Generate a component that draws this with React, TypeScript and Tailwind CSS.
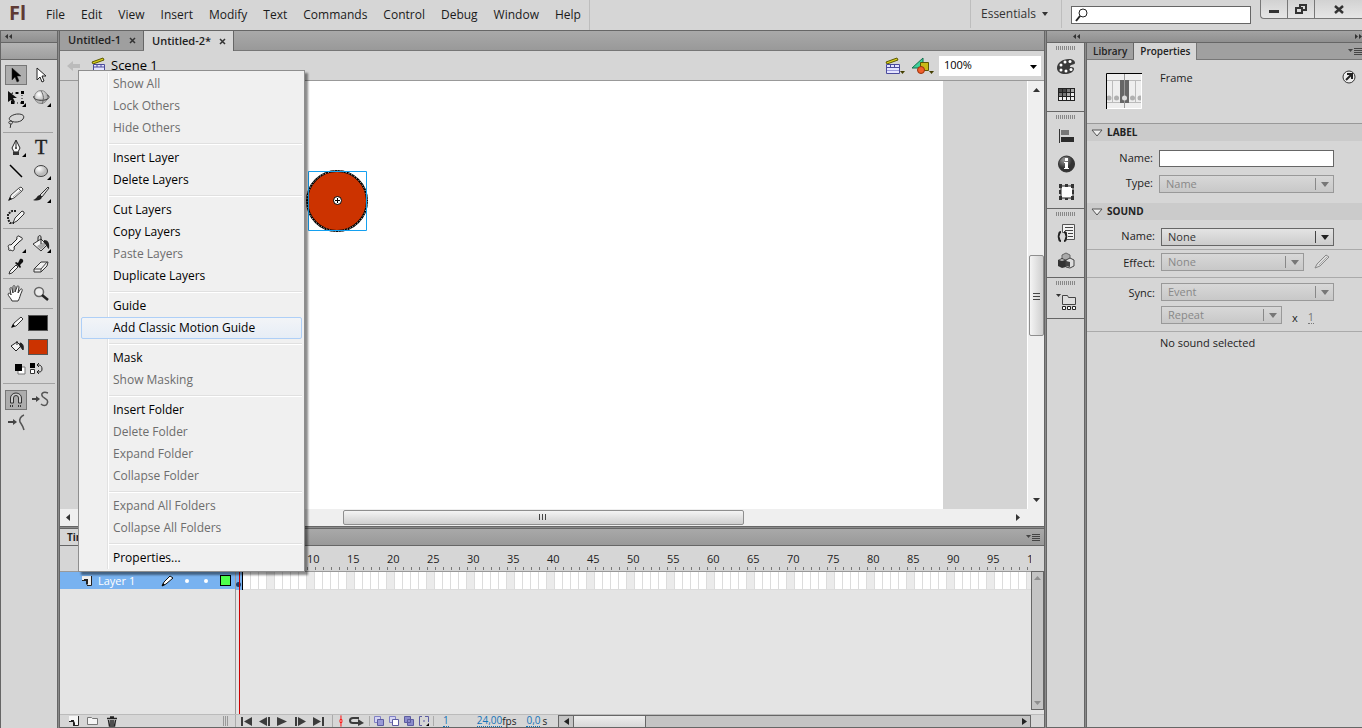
import React from 'react';
import clsx from 'clsx';

const menus = ['File', 'Edit', 'View', 'Insert', 'Modify', 'Text', 'Commands', 'Control', 'Debug', 'Window', 'Help'];

// Each inner list is one block of the layer menu, blocks are split by a line
const layerMenu = [
  [{ text: 'Show All', off: true }, { text: 'Lock Others', off: true }, { text: 'Hide Others', off: true }],
  [{ text: 'Insert Layer' }, { text: 'Delete Layers' }],
  [{ text: 'Cut Layers' }, { text: 'Copy Layers' }, { text: 'Paste Layers', off: true }, { text: 'Duplicate Layers' }],
  [{ text: 'Guide' }, { text: 'Add Classic Motion Guide', active: true }],
  [{ text: 'Mask' }, { text: 'Show Masking', off: true }],
  [{ text: 'Insert Folder' }, { text: 'Delete Folder', off: true }, { text: 'Expand Folder', off: true }, { text: 'Collapse Folder', off: true }],
  [{ text: 'Expand All Folders', off: true }, { text: 'Collapse All Folders', off: true }],
  [{ text: 'Properties...' }],
] as { text: string; off?: boolean; active?: boolean }[][];

interface SvgProps {
  w?: number;
  h?: number;
  className?: string;
  children: React.ReactNode;
}

const Svg: React.FC<SvgProps> = ({ w = 20, h = 20, className, children }) => (
  <svg width={w} height={h} viewBox={`0 0 ${w} ${h}`} fill="none" className={clsx('shrink-0', className)} aria-hidden="true">
    {children}
  </svg>
);

// Small corner triangle on tools that have a flyout
const corner = <path d="M20 15v4h-4z" fill="#000" />;

const pencil = (
  <>
    <path d="M3 16l2-5 8-7 2-1 2 2-1 2-8 7z" fill="#f8f8f8" stroke="#444" />
    <path d="M2 17l2-4 2 2z" fill="#111" />
    <path d="M12 4l3 3" stroke="#555" />
    <path d="M7 13l7-6" stroke="#aaa" />
  </>
);

const bucket = (
  <>
    <path d="M2 10l8-5 6 6-6 6z" fill="#f4f4f4" stroke="#333" />
    <path d="M6 12l7-4 2 3-5 5z" fill="#aaa" />
    <path d="M10 10V3c0-2-3-2-3 1v3" stroke="#222" />
    <path d="M13 6c4 0 6 3 5 9-2-1-2-4-5-6z" fill="#222" />
  </>
);

const arrowPath = 'M6 3v12l3-3 2 5 2-1-2-5h4z';

const toolGroups: { name: string; icon: React.ReactNode; selected?: boolean }[][] = [
  [
    { name: 'Selection', selected: true, icon: <path d={arrowPath} fill="#000" stroke="#222" strokeWidth=".5" /> },
    { name: 'Subselection', icon: <path d={arrowPath} fill="#fff" stroke="#222" /> },
    {
      name: 'Free Transform',
      icon: (
        <>
          <path d="M6 5h10v10H6z" stroke="#111" strokeDasharray="1 2" />
          <path d="M15 3h3v3h-3zM15 13h3v3h-3zM5 13h3v3H5zM10 4h2v2h-2z" fill="#000" />
          <path d="M2 3v11l3-2 2 3 2-1-2-4h4z" fill="#111" />
          {corner}
        </>
      ),
    },
    {
      name: '3D Rotation',
      icon: (
        <>
          <circle cx="10" cy="9" r="6.5" fill="url(#ball)" stroke="#888" />
          <path d="M3 8c-3 5 15 6 15 1 0-2-2-2-2-2" stroke="#333" />
          <path d="M10 3c3 4 3 9 1 13" stroke="#666" />
          {corner}
        </>
      ),
    },
    {
      name: 'Lasso',
      icon: (
        <>
          <path d="M5 10C0 7 7 3 12 3s7 2 5 5-8 4-12 2z" stroke="#333" />
          <path d="M5 10c-3 0-3 3 0 3 2 0 2-3 0-3M5 13c-1 1 0 3-1 4" stroke="#333" />
        </>
      ),
    },
  ],
  [
    {
      name: 'Pen',
      icon: (
        <>
          <path d="M10 2l-4 8 2 4h4l2-4z" fill="#fafafa" stroke="#222" />
          <path d="M10 3v6" stroke="#222" />
          <circle cx="10" cy="10" r="1" fill="#222" />
          <path d="M7 14h6v3H7z" fill="#333" />
          {corner}
        </>
      ),
    },
    { name: 'Text', icon: <text x="10" y="16" textAnchor="middle" fill="#222" stroke="#222" strokeWidth=".4" className="font-['Liberation_Serif',serif] text-[20px]">T</text> },
    { name: 'Line', icon: <path d="M4 4l12 12" stroke="#000" strokeWidth="1.5" /> },
    {
      name: 'Oval',
      icon: (
        <>
          <ellipse cx="10" cy="10" rx="6.5" ry="5.5" fill="url(#ball)" stroke="#444" />
          {corner}
        </>
      ),
    },
    { name: 'Pencil', icon: pencil },
    {
      name: 'Brush',
      icon: (
        <>
          <path d="M17 3l-8 8 2 2 7-9z" fill="#ddd" stroke="#333" />
          <path d="M9 11c-3 0-3 4-7 5 3 1 8 1 9-3z" fill="#222" />
          {corner}
        </>
      ),
    },
    {
      name: 'Deco',
      icon: (
        <>
          <path d="M7 16l2-5 7-7 2 1v2l-7 7z" fill="#f4f4f4" stroke="#333" />
          <path d="M10 4H6L2 7v5l2 4h4" stroke="#222" strokeWidth="2" strokeDasharray="2 1" />
        </>
      ),
    },
  ],
  [
    {
      name: 'Bone',
      icon: (
        <>
          <path d="M3 14c-2-2 0-4 2-3l6-6c-1-3 2-4 3-2 3 0 3 3 0 4l-6 6c1 3-1 5-3 3-2 1-3 0-2-2z" fill="#f4f4f4" stroke="#222" />
          {corner}
        </>
      ),
    },
    { name: 'Paint Bucket', icon: <>{bucket}{corner}</> },
    {
      name: 'Eyedropper',
      icon: (
        <>
          <path d="M3 17l1-3 6-6 2 2-6 6z" fill="#f4f4f4" stroke="#333" />
          <path d="M9 6l5 5 1-1-1-2 3-3c1-2-1-4-3-3l-2 4-2-1z" fill="#111" />
        </>
      ),
    },
    {
      name: 'Eraser',
      icon: (
        <>
          <path d="M3 12l7-7h7l-1 4-6 6H3z" fill="#f0f0f0" stroke="#333" />
          <path d="M3 12h7l6-7M10 12v3" stroke="#444" />
        </>
      ),
    },
  ],
  [
    {
      name: 'Hand',
      icon: (
        <path
          d="M6 17c-1-3-4-5-4-7 1-2 3 0 3 1L4 5c0-2 2-2 2 0l1 4V3c0-2 2-2 2 0v5l2-5c0-2 2-1 2 0l-1 6 2-3c1-2 3-1 2 1-2 4-2 7-4 10z"
          fill="#fff"
          stroke="#333"
        />
      ),
    },
    {
      name: 'Zoom',
      icon: (
        <>
          <circle cx="8" cy="8" r="4.5" fill="#ececec" stroke="#666" strokeWidth="1.5" />
          <path d="M11 11l6 5" stroke="#222" strokeWidth="2.5" />
        </>
      ),
    },
  ],
];

const ToolButton: React.FC<{ name: string; selected?: boolean; children: React.ReactNode }> = ({ name, selected, children }) => (
  <button
    type="button"
    aria-label={name}
    className={clsx(
      'flex h-5 w-[22px] items-center justify-center place-self-center',
      selected && 'border border-[#777] bg-[#adadad]'
    )}
  >
    <Svg w={20} h={20}>{children}</Svg>
  </button>
);

const Toolbar = () => (
  <aside className="flex w-[60px] shrink-0">
    <div className="w-[57px] border-l border-[#666]">
      <div className="h-3 border-b border-[#666] bg-linear-to-b from-[#a3a3a3] to-[#8f8f8f] pt-[3px] pl-1">
        <Collapse />
      </div>
      <div className="h-[17px] border-b border-[#666] bg-linear-to-b from-[#b4b4b4] to-[#9e9e9e]" />
      {toolGroups.map((group, index) => (
        <div key={index} className="mr-1 ml-[2px] grid min-h-[30px] auto-rows-[23px] grid-cols-2 border-b border-[#a3a3a3] pt-[3px]">
          {group.map((tool) => (
            <ToolButton key={tool.name} name={tool.name} selected={tool.selected}>
              {tool.icon}
            </ToolButton>
          ))}
        </div>
      ))}

      {/* Stroke and fill colours */}
      <div className="mx-[2px] border-b border-[#a3a3a3] pt-[2px]">
        <div className="flex h-6 items-center gap-[2px] pl-[7px]">
          <Svg w={16} h={20}>
            <path d="M2 14l2-4 7-6 2 2-7 7z" fill="#f8f8f8" stroke="#333" />
            <path d="M1 15l2-4 2 2z" fill="#000" />
          </Svg>
          <button type="button" aria-label="Stroke color" className="h-4 w-5 border border-[#555] bg-black" />
        </div>
        <div className="flex h-6 items-center gap-[2px] pl-[7px]">
          <Svg w={16} h={20}>
            <path d="M1 9l6-4 4 4-5 5z" fill="#f4f4f4" stroke="#222" />
            <path d="M7 8V4M10 6c3 0 4 4 3 7l-3-4z" fill="#222" stroke="#222" />
          </Svg>
          <button type="button" aria-label="Fill color" className="h-4 w-5 border border-[#555] bg-[#cc3300]" />
        </div>
        <div className="flex h-6 items-start gap-1 pt-1 pl-[11px]">
          <button type="button" aria-label="Black and white">
            <Svg w={12} h={12}>
              <path d="M4 4h7v7H4z" fill="#fff" stroke="#777" />
              <path d="M1 1h7v7H1z" fill="#000" />
            </Svg>
          </button>
          <button type="button" aria-label="Swap colors">
            <Svg w={13} h={12}>
              <path d="M0 0h5v5H0z" fill="#000" />
              <path d="M.5 6.5h4v4h-4z" fill="#fff" stroke="#333" />
              <path d="M7 2h2c2 0 3 2 3 4s-1 3-3 3H7M9 0L7 2l2 2M9 7L7 9l2 2" stroke="#222" />
            </Svg>
          </button>
        </div>
      </div>

      {/* Options of the current tool */}
      <div className="mr-1 ml-[2px] grid auto-rows-[23px] grid-cols-2 pt-1">
        <ToolButton name="Snap to Objects" selected>
          <path d="M4.500 13V8a5.500 5 0 0 1 11 0v5h-3V8a2.500 2.500 0 0 0-5 0v5z" fill="#ccc" stroke="#333" />
          <path d="M4 16h4M12 16h4" stroke="#111" strokeWidth="1.5" strokeDasharray="1 1" />
        </ToolButton>
        <ToolButton name="Smooth">
          <path d="M1 9h5" stroke="#444" strokeWidth="2" />
          <path d="M5 6l4 3-4 3z" fill="#444" />
          <path d="M17 3c-5-2-8 1-5 4 3 2 6 3 4 7-1 2-4 2-6 0" stroke="#555" strokeWidth="1.500" />
        </ToolButton>
        <ToolButton name="Straighten">
          <path d="M2 9h6" stroke="#444" strokeWidth="2" />
          <path d="M7 6l4 3-4 3z" fill="#444" />
          <path d="M18 2c-3 1-5 4-4 7 2 3 3 4 4 8" stroke="#555" strokeWidth="1.500" />
        </ToolButton>
      </div>
    </div>
    <Splitter />
  </aside>
);

const Splitter = () => <div className="w-[3px] shrink-0 border-x border-[#666] bg-[#8a8a8a]" />;

const Collapse: React.FC<{ right?: boolean }> = ({ right }) => (
  <Svg w={8} h={5} className={right ? 'rotate-180' : ''}>
    <path d="M3 0v5L0 2.500zM7 0v5L4 2.500z" fill="#333" />
  </Svg>
);

const PanelMenuIcon = () => (
  <Svg w={14} h={9}>
    <path d="M0 2h5L2.500 5z" fill="#444" />
    <path d="M6 1.500h8M6 3.500h8M6 5.500h8M6 7.500h8" stroke="#444" />
  </Svg>
);

const Header = () => (
  <header className="flex h-[30px] shrink-0 items-center">
    <span className="w-[38px] pb-1 pl-[9px] font-['Open_Sans',sans-serif] text-xl font-bold text-[#5e3a34]">Fl</span>
    <nav className="flex self-stretch border-r border-[#bdbdbd]">
      {menus.map((menu) => (
        <button key={menu} type="button" className="px-2 text-xs text-[#1a1a1a]">
          {menu}
        </button>
      ))}
    </nav>
    <div className="ml-auto flex h-full items-start">
      <button type="button" className="flex h-7 w-[92px] items-center gap-[6px] border-x border-[#bdbdbd] pl-[10px] text-xs text-[#333]">
        Essentials
        <Svg w={6} h={4}>
          <path d="M0 0h6L3 4z" fill="#333" />
        </Svg>
      </button>
      <label className="mt-[6px] ml-[9px] flex h-[18px] w-[180px] items-center border border-[#666] bg-white pl-[3px]">
        <Svg w={13} h={14}>
          <circle cx="8" cy="5" r="4" stroke="#222" />
          <path d="M5 8l-4 5" stroke="#222" strokeWidth="2" />
        </Svg>
        <input aria-label="Search" className="w-full min-w-0 outline-none" />
      </label>
      <div className="ml-[9px] flex h-[19px] rounded-bl border-b border-l border-[#777] bg-linear-to-b from-[#d2d2d2] to-[#e6e6e6]">
        <button type="button" aria-label="Minimize" className="flex w-[27px] items-center justify-center border-r border-[#777] pt-1">
          <Svg w={10} h={3}>
            <path d="M0 0h10v3H0z" fill="#333" />
          </Svg>
        </button>
        <button type="button" aria-label="Restore" className="flex w-[27px] items-center justify-center border-r border-[#777]">
          <Svg w={12} h={10}>
            <path d="M5 1h6v5H5z" stroke="#333" strokeWidth="2" />
            <path d="M1 4h6v5H1z" fill="#ddd" stroke="#333" strokeWidth="2" />
          </Svg>
        </button>
        <button type="button" aria-label="Close" className="flex w-[47px] items-center justify-center">
          <Svg w={10} h={9}>
            <path d="M1 1l8 7M9 1L1 8" stroke="#333" strokeWidth="2.500" />
          </Svg>
        </button>
      </div>
    </div>
  </header>
);

const DocTab: React.FC<{ name: string; active?: boolean }> = ({ name, active }) => (
  <div
    className={clsx(
      'flex items-center gap-2 border-r border-[#666] pr-[7px] pl-2 text-[11px] font-semibold text-[#222]',
      active ? 'h-5 bg-[#d6d6d6]' : 'h-[19px] bg-[#9f9f9f]'
    )}
  >
    {name}
    <button type="button" aria-label={`Close ${name}`}>
      <Svg w={7} h={7}>
        <path d="M1 1l5 5M6 1L1 6" stroke="#333" strokeWidth="1.500" />
      </Svg>
    </button>
  </div>
);

const clapper = (
  <>
    <path d="M1 5l11-4 1 2L2 7z" fill="#d8cf1c" stroke="#5c5800" />
    <path d="M2.500 7.500h11v7h-11z" fill="#e4e4ff" stroke="#4a4a9c" />
    <path d="M3 10h10M6 8v2M10 8v2" stroke="#4a4a9c" />
  </>
);

const EditBar = () => (
  <div className="flex h-[30px] shrink-0 items-center border-b border-[#999] pr-[3px] pl-[7px]">
    <Svg w={14} h={12}>
      <path d="M0 6l6-5v3h7v4H6v3z" fill="#bbb" />
    </Svg>
    <Svg w={16} h={18} className="ml-[10px]">{clapper}</Svg>
    <span className="ml-1 text-[13px] text-black">Scene 1</span>
    <button type="button" aria-label="Edit Scene" className="ml-auto">
      <Svg w={20} h={18}>
        <path d="M1 5l11-4 1 2L2 7z" fill="#d8cf1c" stroke="#5c5800" />
        <path d="M1.500 7.500h13v9h-13z" fill="#e4e4ff" stroke="#4a4a9c" />
        <path d="M2 10.500h12M5.500 8v2M9.500 8v2" stroke="#4a4a9c" />
        <path d="M2 13.500h12" stroke="#9c9cdc" />
        <path d="M15 14h5l-2.500 3z" fill="#443f00" />
      </Svg>
    </button>
    <button type="button" aria-label="Edit Symbols" className="ml-[7px]">
      <Svg w={22} h={18}>
        <path d="M0 11L11 1v10z" fill="#3fd09b" stroke="#14714d" />
        <path d="M8.500 5.500h8v8h-8z" fill="#c9b916" stroke="#5d5606" />
        <circle cx="9" cy="13" r="3.500" fill="#f2602a" stroke="#98320c" />
        <path d="M17 14h5l-2.500 3z" fill="#443f00" />
      </Svg>
    </button>
    <div className="relative ml-[5px]">
      <select aria-label="Zoom" className="block h-5 w-[102px] appearance-none bg-white pl-[5px] text-[11px] text-black">
        <option>100%</option>
      </select>
      <Svg w={7} h={4} className="pointer-events-none absolute top-[9px] right-1">
        <path d="M0 0h7L3.500 4z" fill="#000" />
      </Svg>
    </div>
  </div>
);

const Stage = () => (
  <div className="flex min-h-0 flex-1">
    <div className="flex min-w-0 flex-1 bg-[#d4d4d4]">
      <div className="relative mr-[84px] ml-20 flex-1 overflow-hidden bg-white">
        <Svg w={64} h={64} className="absolute top-[88px] left-[165px]">
          <circle cx="32" cy="32" r="30" fill="#cc3300" stroke="#000" strokeWidth="2" />
          <circle cx="32" cy="32" r="30" stroke="#fff" strokeDasharray="1 2" />
          <path d="M3.500 2.500h58v59h-58z" stroke="#14a0f0" />
          <circle cx="32.500" cy="31.500" r="4" fill="#fff" stroke="#000" />
          <path d="M30 31.500h5M32.500 29v5" stroke="#000" />
        </Svg>
      </div>
    </div>
    {/* Vertical scroll bar */}
    <div className="flex w-[17px] flex-col items-center border-l border-white bg-[#efefef] py-[7px]">
      <Svg w={7} h={4}>
        <path d="M0 4h7L3.500 0z" fill="#333" />
      </Svg>
      <div className="mt-[163px] flex h-[81px] w-[15px] items-center justify-center rounded-xs border border-[#8e8e8e] bg-linear-to-r from-[#f4f4f4] to-[#cfcfcf]">
        <Svg w={7} h={8}>
          <path d="M0 1.500h7M0 4.500h7M0 7.500h7" stroke="#444" />
        </Svg>
      </div>
      <Svg w={7} h={4} className="mt-auto">
        <path d="M0 0h7L3.500 4z" fill="#333" />
      </Svg>
    </div>
  </div>
);

const StageScroll = () => (
  <div className="flex h-[17px] shrink-0 items-center justify-between bg-[#efefef] pr-6 pl-[6px]">
    <Svg w={4} h={7}>
      <path d="M4 0v7L0 3.500z" fill="#333" />
    </Svg>
    <div className="flex h-[15px] w-[401px] items-center justify-center rounded-xs border border-[#8e8e8e] bg-linear-to-b from-[#f4f4f4] to-[#cfcfcf]">
      <Svg w={8} h={7}>
        <path d="M.500 0v6M3.500 0v6M6.500 0v6" stroke="#444" />
      </Svg>
    </div>
    <Svg w={4} h={7}>
      <path d="M0 0v7l4-3.500z" fill="#333" />
    </Svg>
  </div>
);

const Playback = () => (
  <div className="flex items-center gap-[7px] pl-[5px]">
    {[
      ['First frame', 'M0 1h2v9H0zM11 1v9L3 5.500z'],
      ['Step back', 'M8 1v9L0 5.500zM9 1h2v9H9z'],
      ['Play', 'M0 1v9l10-4.500z'],
      ['Step forward', 'M0 1h2v9H0zM3 1v9l8-4.500z'],
      ['Last frame', 'M0 1v9l8-4.500zM9 1h2v9H9z'],
    ].map(([name, d]) => (
      <button key={name} type="button" aria-label={name}>
        <Svg w={11} h={11}>
          <path d={d} fill="#3c3c3c" />
        </Svg>
      </button>
    ))}
  </div>
);

const onion = <path d="M.5 .5h6v6h-6z" fill="#d4d4f2" stroke="#8080c4" />;

const BottomBar = () => (
  <div className="flex h-[13px] shrink-0 border-t border-[#bbb] text-[10px]">
    <div className="flex w-[175px] shrink-0 items-center gap-2 pl-[9px]">
      <button type="button" aria-label="New Layer">
        <Svg w={10} h={10}>
          <path d="M0 0h10v10H5V6H0z" fill="#f6f6f6" />
          <path d="M9.500 0v9.500H4M0 5.500h5V9" stroke="#222" />
          <path d="M2 4h3v2l1 1v2H4V6H2z" fill="#222" />
        </Svg>
      </button>
      <button type="button" aria-label="New Folder">
        <Svg w={12} h={10}>
          <path d="M.5 1.500h4l1 1h5v6H.5z" fill="#f4f4f4" stroke="#777" />
        </Svg>
      </button>
      <button type="button" aria-label="Delete">
        <Svg w={10} h={11}>
          <path d="M0 2.500h10M3 1h4M1.500 4l1 6h5l1-6M4 4v5M6 4v5" stroke="#222" strokeWidth="1.500" />
        </Svg>
      </button>
      <Svg w={6} h={10} className="mr-[6px] ml-auto">
        <path d="M.5 0v10M2.500 0v10M4.500 0v10" stroke="#999" />
      </Svg>
    </div>
    <div className="flex w-[323px] shrink-0 items-center border-l border-[#aaa]">
      <Playback />
      <Svg w={16} h={12} className="ml-2 border-l border-[#aaa]">
        <path d="M8.500 0v12" stroke="#f00" />
        <path d="M7.500 4.500h2v3h-2z" fill="#fff" stroke="#f00" />
      </Svg>
      <Svg w={17} h={10}>
        <path d="M12 7H5C1 7 1 2 5 2h6" stroke="#3c3c3c" strokeWidth="2" />
        <path d="M10 3l6 4-6 3z" fill="#3c3c3c" />
      </Svg>
      <div className="ml-1 flex gap-[5px] border-x border-[#aaa] px-1">
        <Svg w={10} h={10}>
          {onion}
          <path d="M3.500 3.500h6v6h-6z" fill="#9a9ad6" stroke="#5c5ca0" />
        </Svg>
        <Svg w={10} h={10}>
          {onion}
          <path d="M3.500 3.500h6v6h-6z" fill="#fff" stroke="#5c5ca0" />
        </Svg>
        <Svg w={10} h={10}>
          <path d="M.5 .5h6v6h-6zM3.500 3.500h6v6h-6z" fill="#8c8ccb" stroke="#5c5ca0" />
        </Svg>
        <Svg w={10} h={10}>
          <path d="M3 .5H.5v9H3M6 .5h3.500V6M4 5h2" stroke="#5c5ca0" />
          <path d="M10 7v3H7z" fill="#000" />
        </Svg>
      </div>
      <span className="ml-[9px] border-b border-dotted border-[#1473b8] leading-[11px] text-[#1473b8]">1</span>
      <span className="ml-7 border-b border-dotted border-[#1473b8] leading-[11px] text-[#1473b8]">24,00</span>
      <span className="leading-3 text-[#222]">fps</span>
      <span className="ml-[10px] border-b border-dotted border-[#1473b8] leading-[11px] text-[#1473b8]">0,0</span>
      <span className="ml-[2px] leading-3 text-[#222]">s</span>
    </div>
    <div className="mr-[13px] flex flex-1 items-center border border-b-0 border-[#666] bg-[#c4c4c4]">
      <div className="flex h-full w-[15px] items-center justify-center border-r border-[#666]">
        <Svg w={5} h={7}>
          <path d="M5 0v7L0 3.500z" fill="#222" />
        </Svg>
      </div>
      <div className="h-full w-[72px] border-r border-[#666] bg-linear-to-b from-[#ededed] to-[#d8d8d8]" />
      <Svg w={5} h={7} className="mr-[3px] ml-auto">
        <path d="M0 0v7l5-3.500z" fill="#222" />
      </Svg>
    </div>
  </div>
);

const Timeline = () => (
  <section className="flex h-[198px] shrink-0 flex-col">
    <div className="flex h-[17px] shrink-0 items-center justify-between border-b border-[#666] bg-linear-to-b from-[#a9a9a9] to-[#999] pr-1">
      <h2 className="h-4 w-16 bg-[#d6d6d6] pl-[7px] text-[10px] leading-4 font-bold text-[#222]">Timeline</h2>
      <PanelMenuIcon />
    </div>
    <div className="relative flex min-h-0 flex-1">
      {/* Layers */}
      <div className="w-[175px] shrink-0 bg-[#e4e4e4]">
        <div className="h-[26px] border-b border-[#999] bg-[#d6d6d6]" />
        <div className="flex h-[17px] items-center bg-[#78b2f0] pl-[22px] text-[11px] text-white">
          <Svg w={10} h={11}>
            <path d="M0 1h10v10H5V6H0z" fill="#eee" />
            <path d="M9.500 1v9.500H5M0 5.500h5V10" stroke="#222" />
            <path d="M2 4h4v5H4V6H2z" fill="#222" />
          </Svg>
          <span className="ml-[6px] w-[63px] leading-4">Layer 1</span>
          <Svg w={13} h={12}>
            <path d="M1 11l2-4 6-6 3 2-7 6z" fill="#fff" stroke="#111" />
            <path d="M1 11l1-3 2 2z" fill="#000" />
          </Svg>
          <span className="ml-[11px] size-1 rounded-full bg-white" />
          <span className="ml-[15px] size-1 rounded-full bg-white" />
          <span className="ml-3 size-[11px] border border-black bg-[#4dff4d]" />
        </div>
      </div>
      {/* Frames */}
      <div className="flex min-w-0 flex-1 flex-col bg-[#e4e4e4]">
        <div className="mr-[13px] h-[26px] shrink-0 overflow-hidden border-b border-[#999] bg-[#d6d6d6]">
          <div className="flex">
            {Array.from({ length: 100 }, (_, i) => (
              <div key={i} className="relative h-[25px] w-2 shrink-0">
                {(i + 1) % 5 === 0 && <span className="block text-[11px] leading-[26px] text-[#222]">{i + 1}</span>}
                <i className="absolute bottom-px left-0 h-[3px] w-px bg-[#777]" />
              </div>
            ))}
          </div>
        </div>
        <div className="mr-[13px] flex h-[18px] shrink-0 overflow-hidden">
          <div className="flex w-2 shrink-0 items-end justify-center border-r border-black bg-[#78b2f0] pb-[3px]">
            <span className="size-[5px] rounded-full bg-[#1c3f70]" />
          </div>
          {Array.from({ length: 99 }, (_, i) => (
            <div key={i} className={clsx('w-2 shrink-0 border-r border-b border-[#dcdcdc]', (i + 2) % 5 === 0 ? 'bg-[#ebebeb]' : 'bg-white')} />
          ))}
        </div>
      </div>
      <div className="absolute top-[26px] bottom-0 left-[175px] w-px bg-[#999]" />
      {/* Playhead */}
      <div className="absolute top-[26px] bottom-0 left-[179px] w-px bg-[#cc0000]" />
      <div className="absolute top-0 right-0 h-[26px] w-[13px] border-b border-[#999] bg-[#d6d6d6]" />
      <div className="absolute top-[25px] right-0 bottom-1 flex w-[13px] flex-col items-center justify-between border border-[#666] bg-[#c4c4c4] py-1">
        <Svg w={7} h={4}>
          <path d="M0 4h7L3.500 0z" fill="#8e8e8e" />
        </Svg>
        <Svg w={7} h={4}>
          <path d="M0 0h7L3.500 4z" fill="#8e8e8e" />
        </Svg>
      </div>
    </div>
    <BottomBar />
  </section>
);

const LayerMenu = () => (
  <div role="menu" className="absolute top-[39px] left-[18px] w-[227px] border border-[#8e8e8e] bg-[#f0f0f0] p-[2px] text-xs text-black shadow-[3px_3px_2px_rgba(0,0,0,0.45)]">
    <div className="absolute top-[2px] bottom-[2px] left-[28px] w-[2px] border-l border-[#e2e2e2] bg-white" />
    {layerMenu.map((block, index) => (
      <div key={index} className={clsx('relative', index > 0 && 'pt-2')}>
        {index > 0 && <div className="absolute top-[4px] right-0 left-[28px] h-[2px] border-t border-[#e0e0e0] bg-white" />}
        {block.map((item) => (
          <button
            key={item.text}
            type="button"
            role="menuitem"
            disabled={item.off}
            className={clsx(
              'block h-[22px] w-full rounded-xs border pl-[31px] text-left leading-5',
              item.active ? 'border-[#aecff7] bg-linear-to-b from-[#f2f4f7] to-[#e6edf6]' : 'border-transparent',
              item.off && 'text-[#6d6d6d]'
            )}
          >
            {item.text}
          </button>
        ))}
      </div>
    ))}
  </div>
);

const dockGroups: { name: string; icon: React.ReactNode }[][] = [
  [
    {
      name: 'Color',
      icon: (
        <>
          <path d="M1 11c0-5 5-9 12-9 4 0 6 2 6 4s-4 1-5 3 4 0 4 3-5 5-9 5-8-2-8-6z" fill="#3a3a3a" />
          <circle cx="5" cy="8" r="1.500" fill="#fff" />
          <circle cx="9" cy="5" r="1.500" fill="#fff" />
          <circle cx="14" cy="4.500" r="1.500" fill="#fff" />
          <circle cx="5" cy="13" r="1.500" fill="#fff" />
          <circle cx="10" cy="14" r="1.500" fill="#fff" />
          <circle cx="15" cy="12.500" r="1.500" fill="#fff" />
        </>
      ),
    },
    {
      name: 'Swatches',
      icon: (
        <>
          <path d="M2 3h17v13H2z" fill="#222" />
          <path d="M3 4h3v3H3zM7 4h3v3H7z" fill="#444" />
          <path d="M11 4h3v3h-3zM3 8h3v3H3zM7 8h3v3H7z" fill="#777" />
          <path d="M15 4h3v3h-3zM11 8h3v3h-3z" fill="#aaa" />
          <path d="M15 8h3v3h-3zM3 12h3v3H3zM7 12h3v3H7zM11 12h3v3h-3zM15 12h3v3h-3z" fill="#f0f0f0" />
        </>
      ),
    },
  ],
  [
    {
      name: 'Align',
      icon: (
        <>
          <path d="M3.500 3v14" stroke="#333" />
          <path d="M5 4h8v5H5z" fill="#777" />
          <path d="M5 11h13v5H5z" fill="#2c2c2c" />
        </>
      ),
    },
    {
      name: 'Info',
      icon: (
        <>
          <circle cx="10.500" cy="10" r="8" fill="url(#dark)" stroke="#333" />
          <path d="M9 4h3v3H9zM8 8h4v6h1v1H8v-1h1V9H8z" fill="#fff" />
        </>
      ),
    },
    {
      name: 'Transform',
      icon: (
        <>
          <path d="M5 4h12v12H5z" fill="#fff" stroke="#222" />
          <path d="M3 2h3v4H3zM9 2h3v3H9zM15 2h3v4h-3zM3 8h2v4H3zM16 8h2v4h-2zM3 14h3v4H3zM9 16h3v2H9zM15 14h3v4h-3z" fill="#333" />
        </>
      ),
    },
  ],
  [
    {
      name: 'Code Snippets',
      icon: (
        <>
          <path d="M6.500 1.500h12v15h-8v-7h-4z" fill="#f2f2f2" stroke="#555" />
          <path d="M9 4.500h8M9 7.500h8M12 10.500h5M12 13.500h5" stroke="#444" />
          <path d="M5 9c-3 0-1 4-3 4.500 2 .5 0 4.500 3 4.500M8 9c3 0 1 4 3 4.500-2 .5 0 4.500-3 4.500" stroke="#222" strokeWidth="2" />
        </>
      ),
    },
    {
      name: 'Components',
      icon: (
        <>
          <path d="M6 4l4-2 4 2v5H6z" fill="#aaa" stroke="#666" />
          <path d="M2 9l4-2 4 2v7l-4 1-4-2z" fill="#333" />
          <path d="M3 9l3-1 3 1-3 1z" fill="#bbb" />
          <path d="M10 9l4-2 4 2v6l-4 2-4-1z" fill="#ddd" stroke="#444" />
          <path d="M10 10l4 1v5l-4-1z" fill="#444" />
        </>
      ),
    },
  ],
  [
    {
      name: 'Project',
      icon: (
        <>
          <path d="M0 2h5L2.500 5z" fill="#333" />
          <path d="M6.500 3.500h5l1 2h7v7h-13z" fill="#dedede" stroke="#444" />
          <path d="M6.500 14.500h3v3h-3zM11.500 14.500h3v3h-3zM16.500 14.500h3v3h-3z" fill="#fff" stroke="#222" />
        </>
      ),
    },
  ],
];

const Dock = () => (
  <div className="w-[37px] shrink-0">
    {dockGroups.map((group, index) => (
      <div key={index} className="flex flex-col items-center border-b border-[#666] pt-[3px] pb-[2px]">
        <div className="mb-[3px] h-1 w-[19px] bg-[repeating-linear-gradient(90deg,#888_0_1px,transparent_1px_2px)]" />
        {group.map((item) => (
          <button key={item.name} type="button" aria-label={item.name} className="flex h-7 items-center">
            <Svg w={20} h={20}>{item.icon}</Svg>
          </button>
        ))}
      </div>
    ))}
  </div>
);

interface DropProps {
  id: string;
  value: string;
  disabled?: boolean;
  className: string;
}

const Drop: React.FC<DropProps> = ({ id, value, disabled, className }) => (
  <div className={clsx('relative', className)}>
    <select
      id={id}
      disabled={disabled}
      aria-label={id}
      className={clsx(
        'block h-[18px] w-full appearance-none border bg-linear-to-b pl-[6px] text-[11px] leading-4 opacity-100',
        disabled ? 'border-[#999] from-[#d8d8d8] to-[#c8c8c8] text-[#888]' : 'border-[#666] from-[#e4e4e4] to-[#cccccc] text-[#333]'
      )}
    >
      <option>{value}</option>
    </select>
    <Svg w={16} h={12} className="pointer-events-none absolute top-[3px] right-[3px]">
      <path d="M.5 0v12" stroke={disabled ? '#888' : '#444'} />
      <path d="M6 4h8l-4 5z" fill={disabled ? '#777' : '#222'} />
    </Svg>
  </div>
);

const Section: React.FC<{ title: string }> = ({ title }) => (
  <h3 className="flex h-[17px] items-center gap-1 bg-[#cbcbcb] pl-1 text-[10px] font-bold text-[#222]">
    <Svg w={12} h={8}>
      <path d="M1 1h10L6 7z" fill="#eee" stroke="#555" />
    </Svg>
    {title}
  </h3>
);

const labelStyle = 'shrink-0 text-right text-[11px] text-[#222]';

const Properties = () => (
  <section className="min-w-0 flex-1 text-[11px]">
    <div className="flex h-[17px] items-center border-b border-[#777] bg-[#a0a0a0] font-semibold text-[#222]">
      <button type="button" className="h-4 border-r border-[#666] px-[6px] text-[10px]">Library</button>
      <button type="button" className="-mb-px h-[17px] border-r border-[#777] bg-[#d6d6d6] px-[6px] text-[10px]">Properties</button>
      <div className="ml-auto">
        <PanelMenuIcon />
      </div>
    </div>
    <div className="flex h-16 items-start border-b border-[#999] pt-[10px] pr-[6px] pl-[19px] text-[#222]">
      <Svg w={36} h={36} className="mt-[3px]">
        <path d="M0 0h36v36H0z" fill="#eee" />
        <path d="M0 7.500h36M0 29.500h36M6.500 7v22M29.500 7v22" stroke="#bbb" />
        <path d="M14 7h9v23h-9z" fill="#666" />
        <path d="M18.500 0v36" stroke="#999" />
        <circle cx="3" cy="25" r="2.500" fill="#b0b0b0" />
        <circle cx="10.500" cy="25" r="2.500" fill="#b0b0b0" />
        <circle cx="18.500" cy="25" r="2.500" fill="#ddd" />
        <circle cx="26.500" cy="25" r="2.500" fill="#b0b0b0" />
        <circle cx="34" cy="25" r="2.500" fill="#b0b0b0" />
        <path d="M.5 36V.5H36" stroke="#000" />
        <path d="M35.500 1v34.500H1" stroke="#fff" />
      </Svg>
      <span className="ml-[18px]">Frame</span>
      <button type="button" aria-label="Help" className="ml-auto">
        <Svg w={14} h={14}>
          <circle cx="7" cy="7" r="6" fill="#eee" stroke="#333" />
          <path d="M4 10l5-5M5 4h5v5" stroke="#222" strokeWidth="2" />
        </Svg>
      </button>
    </div>

    <Section title="LABEL" />
    <div className="flex h-[34px] items-center gap-[6px]">
      <label htmlFor="frame-name" className={clsx(labelStyle, 'w-[66px]')}>Name:</label>
      <input id="frame-name" className="h-[17px] w-[175px] border border-[#666] bg-white px-1" />
    </div>
    <div className="flex h-[28px] items-start gap-[6px]">
      <label htmlFor="type" className={clsx(labelStyle, 'w-[66px]')}>Type:</label>
      <Drop id="type" value="Name" disabled className="w-[175px]" />
    </div>

    <Section title="SOUND" />
    <div className="flex h-[30px] items-center gap-[6px] border-b border-[#aaa] pt-1">
      <label htmlFor="sound" className={clsx(labelStyle, 'w-[68px]')}>Name:</label>
      <Drop id="sound" value="None" className="w-[173px]" />
    </div>
    <div className="flex h-[28px] items-start gap-[6px] border-b border-[#aaa] pt-[3px]">
      <label htmlFor="effect" className={clsx(labelStyle, 'w-[68px] pt-[2px]')}>Effect:</label>
      <Drop id="effect" value="None" disabled className="w-[143px]" />
      <button type="button" aria-label="Edit sound" className="ml-1">
        <Svg w={16} h={16}>
          <path d="M1 15l2-4 9-9 3 2-9 9z" fill="#ddd" stroke="#888" />
          <path d="M5 12l8-8" stroke="#aaa" />
        </Svg>
      </button>
    </div>
    <div className="flex gap-[6px] border-b border-[#aaa] pt-[5px] pb-[7px]">
      <label htmlFor="sync" className={clsx(labelStyle, 'w-[68px] pt-[2px]')}>Sync:</label>
      <div className="flex flex-col gap-[5px]">
        <Drop id="sync" value="Event" disabled className="w-[173px]" />
        <div className="flex items-end gap-[10px]">
          <Drop id="repeat" value="Repeat" disabled className="w-[121px]" />
          <span className="leading-3 text-[#222]">x</span>
          <span className="border-b border-dotted border-[#777] leading-3 text-[#777]">1</span>
        </div>
      </div>
    </div>
    <p className="pt-[3px] pl-[73px] text-[#222]">No sound selected</p>
  </section>
);

const App = () => (
  <div className="flex h-screen min-h-[640px] flex-col overflow-hidden bg-[#d6d6d6] font-['Open_Sans','Noto_Sans',sans-serif]">
    {/* Gradients shared by the icons */}
    <svg width="0" height="0" className="absolute" aria-hidden="true">
      <radialGradient id="ball" cx="35%" cy="30%">
        <stop offset="0" stopColor="#fff" />
        <stop offset="1" stopColor="#bbb" />
      </radialGradient>
      <radialGradient id="dark" cx="35%" cy="25%">
        <stop offset="0" stopColor="#999" />
        <stop offset="1" stopColor="#333" />
      </radialGradient>
    </svg>
    <Header />
    <div className="flex min-h-0 flex-1 border-t border-[#666]">
      <Toolbar />
      <main className="relative flex min-w-0 flex-1 flex-col border-b border-[#666]">
        <div className="flex h-5 shrink-0 border-b border-[#777] bg-linear-to-b from-[#a9a9a9] to-[#999]">
          <DocTab name="Untitled-1" />
          <DocTab name="Untitled-2*" active />
        </div>
        <EditBar />
        <Stage />
        <StageScroll />
        <div className="h-[3px] shrink-0 border-y border-[#666] bg-[#8a8a8a]" />
        <Timeline />
        <LayerMenu />
      </main>
      <Splitter />
      <div className="flex w-[315px] shrink-0 flex-col border-b border-[#666]">
        <div className="flex h-3 shrink-0 justify-between border-b border-[#666] bg-linear-to-b from-[#a3a3a3] to-[#8f8f8f] pt-[3px]">
          <div className="pl-[26px]">
            <Collapse />
          </div>
          <Collapse right />
        </div>
        <div className="flex min-h-0 flex-1">
          <Dock />
          <Splitter />
          <Properties />
        </div>
      </div>
    </div>
  </div>
);

export default App;
